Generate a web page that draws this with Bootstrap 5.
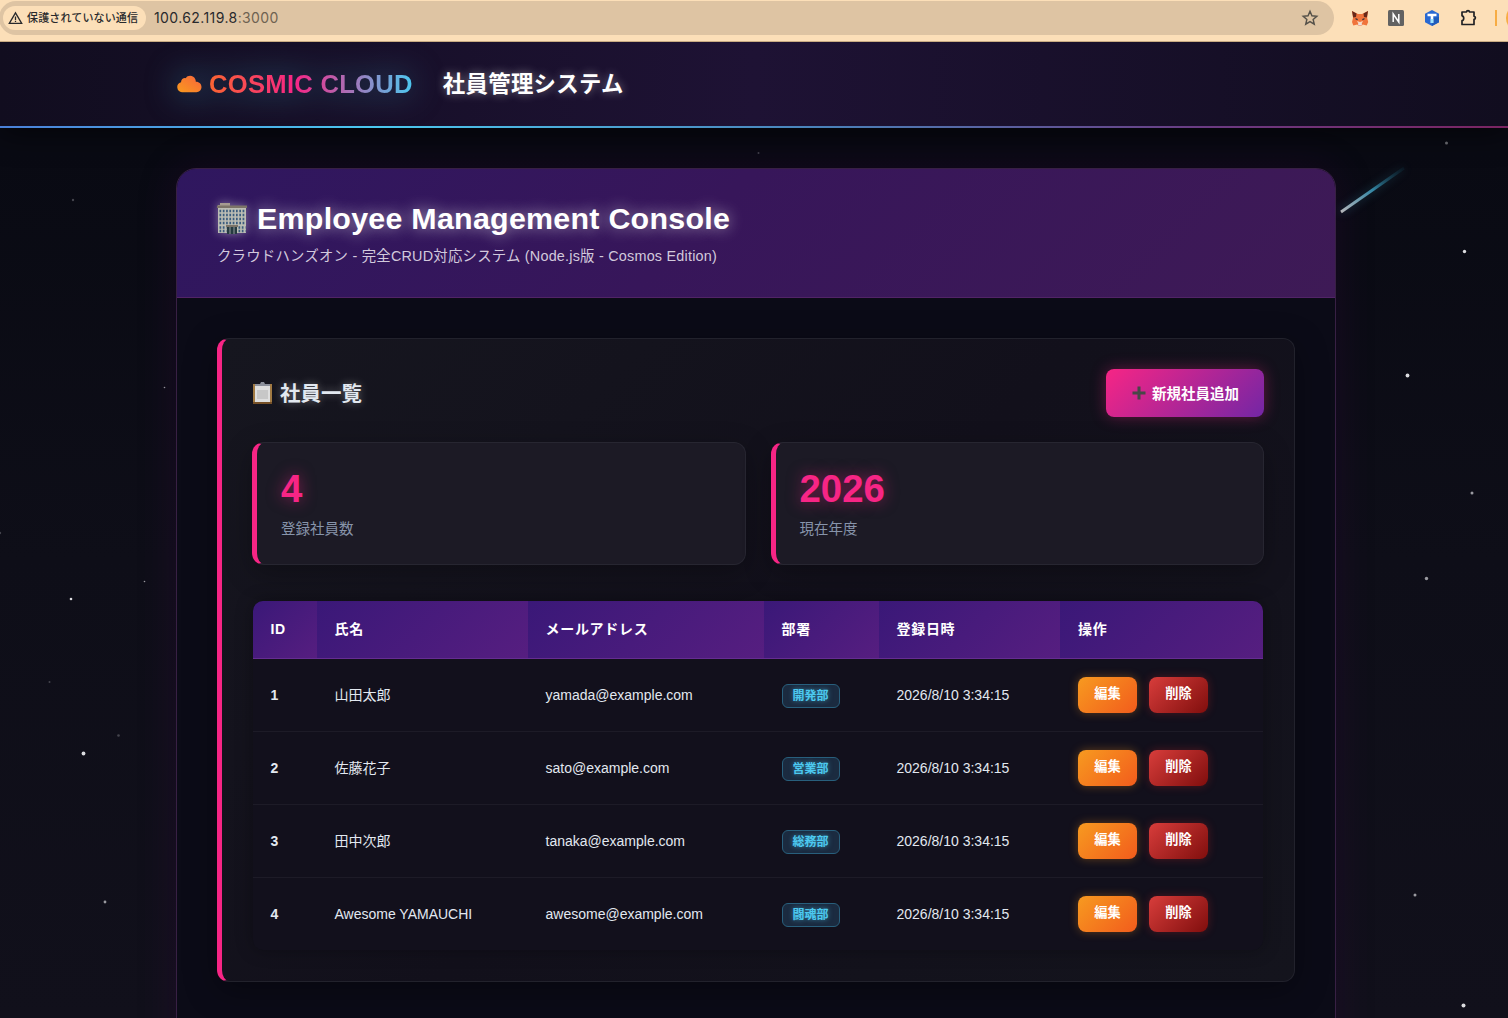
<!DOCTYPE html>
<html lang="ja" data-bs-theme="dark">
<head>
<meta charset="utf-8">
<title>COSMIC CLOUD - 社員管理システム</title>
<link rel="stylesheet" href="https://cdn.jsdelivr.net/npm/bootstrap@5.3.0/dist/css/bootstrap.min.css">
<style>
:root{--pink:#f72585;--cyan:#4cc9f0;--jp:"Liberation Sans","Noto Sans CJK JP",sans-serif}
html,body{height:1018px;overflow:hidden}
body{background:linear-gradient(180deg,#090a13 15%,#0e0e18 55%,#11101b 100%);font-family:var(--jp);color:#e2e8f0;font-size:14px;position:relative;-webkit-font-smoothing:antialiased}
.chrome-bar{height:42px;background:#fcdfb8;border-bottom:1px solid #c8ab83;padding-bottom:5px;position:relative;z-index:3}
.omnibox{height:34px;width:1335px;margin-left:-1px;background:#dec4a3;border-radius:17px;padding:0 15px 0 4px;color:#28292c;font-family:Inter,"Noto Sans CJK JP",sans-serif}
.insecure{height:24px;width:143px;border-radius:12px;background:#fcdfb8;font-size:11px;font-weight:500;padding-left:5px;white-space:nowrap;letter-spacing:.15px}
.address{font-size:14px;margin-left:8px;padding-bottom:1px;white-space:nowrap;letter-spacing:.4px}
.address span{color:#6e6251}
.chrome-icons{padding-left:17px;gap:18px;white-space:nowrap}
.site-head{height:86px;background:linear-gradient(90deg,#110d1f 0%,#1e1234 50%,#110d1f 100%);border-bottom:2px solid;border-image:linear-gradient(90deg,#4a7fd8,#4cc9f0 25%,#4a80b8 55%,#6b3a82 80%,#7b2462) 1;padding-left:176px;position:relative;z-index:2;box-shadow:0 4px 30px rgba(0,0,0,.6)}
.brand{filter:drop-shadow(0 0 16px rgba(76,201,240,.5))}
.brand-name{font-size:25.6px;font-weight:700;line-height:40px;margin-left:7px;letter-spacing:.28px;background:linear-gradient(90deg,#fa6432,#f72585 42%,#4cc9f0);-webkit-background-clip:text;background-clip:text;color:transparent;white-space:nowrap}
.sys-name{font-size:22.4px;font-weight:700;letter-spacing:.3px;margin-left:30px;padding-top:2px;color:#fff;text-shadow:0 0 10px rgba(255,255,255,.45);white-space:nowrap}
.sky{position:absolute;inset:0;width:1508px;height:1018px;z-index:0}
.console{width:1160px;height:900px;margin:40px 0 0 176px;border:1px solid #382044;border-radius:20px 20px 0 0;background:#0b0b17;overflow:hidden;position:relative;z-index:1}
.glow{box-shadow:0 0 40px rgba(80,9,90,.2)}
.console-head{height:129px;background:linear-gradient(135deg,#2f175f 0%,#37165a 45%,#3e1a56 100%);border-bottom:1px solid #512467;padding:26px 40px 0}
.console-title{font-size:30.4px;line-height:46px;font-weight:700;letter-spacing:.26px;color:#fff;text-shadow:0 0 15px rgba(255,255,255,.6);margin:0;white-space:nowrap}
.title-icon{margin-right:10px;filter:drop-shadow(0 0 5px rgba(255,255,255,.4))}
.console-sub{font-size:14.4px;line-height:22px;letter-spacing:.22px;color:#d2c9dc;margin:4px 0 0;white-space:nowrap}
.console-body{padding:40px 40px 0}
.panel{height:644px;background:linear-gradient(135deg,#16161f,#12101b 50%,#14141d);border:1px solid #22222c;border-left:5px solid var(--pink);border-radius:12px;padding:30px 30px 0;box-shadow:0 8px 32px rgba(0,0,0,.35)}
.panel-head{height:48px}
.panel-title{font-size:20.5px;font-weight:700;margin:0;padding-top:2px;color:#e2e8f0;text-shadow:0 0 8px rgba(255,255,255,.35)}
.panel-title svg{margin-right:7px;margin-top:-2px}
.btn-add{width:158px;height:48px;border:0;border-radius:8px;background:linear-gradient(135deg,#f72585,#7326a5);font-size:14.5px;font-weight:700;color:#fff;box-shadow:0 0 15px rgba(247,37,133,.35);padding:3px 0 0 1px;white-space:nowrap}
.btn-add svg{margin-right:6px;margin-top:-4px}
.stats{margin-top:25px;gap:25px}
.stat{height:123px;flex:1;background:#1c1a25;border:1px solid #272631;border-left:5px solid var(--pink);border-radius:12px;padding:24px;box-shadow:0 8px 28px rgba(0,0,0,.28)}
.stat-num{font-size:38.4px;line-height:44px;font-weight:700;color:var(--pink);text-shadow:0 0 15px rgba(247,37,133,.5)}
.stat-label{font-size:14.5px;line-height:22px;color:#8794aa;margin-top:7px}
.grid-wrap{margin:36px 1px 0;border-radius:10px;overflow:hidden;background:#12101c;box-shadow:0 0 18px rgba(0,0,0,.3)}
.people{--bs-table-bg:transparent;table-layout:fixed;width:1010px;margin:0;color:#e2e8f0;white-space:nowrap}
.people>thead>tr>th{height:57px;padding:1px 18px 1px 17.5px;background:linear-gradient(135deg,#3a1878,#561e80);border-bottom:1px solid #652d91;color:#fff;vertical-align:middle;letter-spacing:.7px;font-size:14px}
.people>tbody>tr>td{height:73px;padding:2px 18px 0 17.5px;vertical-align:middle;border-bottom:1px solid #1d1b27;color:#e2e8f0;font-size:14px}
.people>tbody>tr>td:last-child{padding-top:0;padding-left:18px}
.people>thead>tr>th:last-child{padding-left:18px}
.people>tbody>tr:last-child>td{border-bottom:0}
.dept{display:inline-block;position:static;width:58px;height:24px;border:1px solid #285f7c;border-radius:6px;background:#1b2b40;color:var(--cyan);font-size:12px;font-weight:700;line-height:22px;text-align:center;text-shadow:0 0 5px rgba(76,201,240,.6);vertical-align:middle}
.act{width:59px;height:36px;border:0;border-radius:8px;color:#fff;font-size:13.2px;font-weight:700;padding:0 0 2px;line-height:34px}
.act-edit{background:linear-gradient(135deg,#f79a20,#f25c1c);box-shadow:0 0 10px rgba(248,150,30,.35)}
.act-del{background:linear-gradient(135deg,#d83d3b,#800e0d);box-shadow:0 0 10px rgba(214,40,40,.3)}
</style>
</head>
<body>
<svg class="sky" viewBox="0 0 1508 1018">
<defs><linearGradient id="tail" x1="0" y1="1" x2="1" y2="0"><stop offset="0" stop-color="#b5b5ba"/><stop offset=".5" stop-color="#3487a5"/><stop offset="1" stop-color="#0b2330" stop-opacity=".4"/></linearGradient></defs>
<g fill="#dcdce0"><circle cx="71" cy="599" r="1.3"/><circle cx="83.500" cy="753.500" r="1.900"/><circle cx="1464.500" cy="251.500" r="1.700"/><circle cx="1407.500" cy="375.500" r="1.900"/><circle cx="1463.500" cy="1005.500" r="2"/></g>
<g fill="#9a9aa0"><circle cx="105" cy="902" r="1.400"/><circle cx="1472" cy="493" r="1.500"/><circle cx="1426.500" cy="578.500" r="1.700"/><circle cx="1415" cy="895" r="1.500"/><circle cx="1446.500" cy="143" r="1.500" opacity=".7"/><circle cx="164.500" cy="387.500" r=".8"/><circle cx="144.500" cy="581.500" r=".8"/></g>
<g fill="#44444d"><circle cx="73" cy="200" r="1.200"/><circle cx="118.500" cy="735.500" r="1.300"/><circle cx="49.500" cy="682" r="1"/><circle cx="758.500" cy="153" r="1"/><circle cx="0" cy="533" r="1.200"/></g>
</svg>
<div class="chrome-bar d-flex align-items-center">
 <div class="omnibox d-flex align-items-center flex-shrink-0">
  <div class="insecure d-flex align-items-center gap-1"><svg width="15" height="14" viewBox="0 0 15 14" fill="none" stroke="#28292c" stroke-width="1.300"><path d="M7.500 1.800 13.700 12.300H1.300Z"/><path d="M7.500 5.500v3.400M7.500 9.800v1.300"/></svg>保護されていない通信</div>
  <div class="address">100.62.119.8<span>:3000</span></div>
  <svg class="ms-auto" width="18" height="18" viewBox="0 0 24 24" fill="none" stroke="#555149" stroke-width="1.900"><path d="m12 3 2.600 6 6.500.6-4.900 4.300 1.500 6.400L12 16.900l-5.700 3.400 1.500-6.400-4.900-4.300 6.500-.6Z"/></svg>
 </div>
 <div class="chrome-icons d-flex align-items-center">
  <svg width="18" height="18" viewBox="0 0 18 18"><path fill="#f0733b" d="m1 2 6 3h4l6-3-.8 7 1 4-1.500 3.500-4-1L10.500 17h-3l-1.200-1.500-4 1L1 13l1-4Z"/><path fill="#662819" d="m1 2 4.500 2.500L5 8 2.200 8.500ZM17 2l-4.500 2.500L13 8l2.800.5Z"/><path fill="#f7d8bf" d="m6 12 1.500 3h3l1.500-3-3 1Z"/><path fill="#35313a" d="m4.500 9 2.300 1-.2 1.300-2-.7ZM13.500 9l-2.300 1 .2 1.300 2-.7Z"/><path fill="#e9e2e2" d="M7.300 14.500h3.400l.3 2H7Z"/></svg>
  <svg width="18" height="18" viewBox="0 0 18 18"><rect x="1" y="1" width="16" height="16" rx="1.500" fill="#626262"/><path d="M6.200 13V5l5.600 8V5" fill="none" stroke="#fff" stroke-width="1.500"/></svg>
  <svg width="18" height="18" viewBox="0 0 18 18"><path d="m9 1 7 3.800v8.400L9 17l-7-3.800V4.800Z" fill="#2969d2"/><path d="M9 9v8l7-3.800V8Z" fill="#1f5cba"/><path d="M4.500 6h9M9 6v8" stroke="#fff" stroke-width="2.600"/><path d="M9 10v4" stroke="#9be4ff" stroke-width="2.600"/></svg>
  <svg width="18" height="18" viewBox="0 0 18 18" fill="none" stroke="#202124" stroke-width="1.700" stroke-linejoin="round"><path d="M3 3h4.500c.1-1.900 2.900-1.900 3 0H15v4.300c1.900.1 1.900 2.900 0 3V15.500H3v-3.800c2.300-.2 2.300-4.700 0-4.900Z"/></svg>
  <svg width="13" height="20" viewBox="0 0 13 20"><path d="M0 2h2v16H0Z" fill="#f7ac43"/><circle cx="25" cy="10" r="14" fill="#f7ac43"/></svg>
 </div>
</div>
<header class="site-head d-flex align-items-center">
 <div class="brand d-flex align-items-center">
  <svg width="26" height="18" viewBox="0 0 26 18"><defs><linearGradient id="cl" x1="0" y1="1" x2="1" y2="0"><stop stop-color="#f89a1e"/><stop offset="1" stop-color="#f9653c"/></linearGradient></defs><path fill="url(#cl)" d="M6 17.200a5.100 5.100 0 0 1-1-10C5 4 8 2.500 9.800 3.200c2-3.400 8-3.200 9.600 1.400.4.900.4 1.400.4 2.200 3.300-.2 5.700 2.300 5.700 5.200 0 3-2.300 5.200-5 5.200Z"/></svg>
  <span class="brand-name">COSMIC CLOUD</span>
 </div>
 <span class="sys-name">社員管理システム</span>
</header>
<main class="console glow">
 <div class="console-head">
  <h1 class="console-title d-flex align-items-center"><svg class="title-icon" width="30" height="32" viewBox="0 0 30 32"><path fill="#a69c91" d="M3 1h10v3h16v4H1V3h2Z"/><path fill="#bcbdb4" d="M1 6h28v25H1Z"/><path stroke="#3b5c7e" stroke-width="2.500" stroke-dasharray="1.700 1.600" d="M2.500 9h26M2.500 13h26M2.500 17h26M2.500 21h26M2.500 25.500h7M21.500 25.500h7M2.500 29h7M21.500 29h7"/><path fill="#7c7468" d="M0 3.500h30V6H0ZM9 23h12v2H9Z"/><path fill="#253a40" d="M10 25h10v7H10Z"/><path stroke="#93999a" d="M13 25v7M17 25v7"/></svg><span>Employee Management Console</span></h1>
  <p class="console-sub">クラウドハンズオン - 完全CRUD対応システム (Node.js版 - Cosmos Edition)</p>
 </div>
 <div class="console-body">
  <section class="panel">
   <div class="panel-head d-flex align-items-center justify-content-between">
    <h2 class="panel-title d-flex align-items-center"><svg width="21" height="23" viewBox="0 0 21 23"><path fill="#a17a43" d="M1 2h19v20H1Z"/><path fill="#765027" d="M1 20h19v2H1Z"/><path fill="#dedede" d="M3 3h15v17H3Z"/><path fill="#c7c7c7" d="M5 8h11v9H5Z"/><path fill="#8c909b" d="M3 2h5l1-2h3l1 2h5v2H3Z"/></svg>社員一覧</h2>
    <button class="btn btn-add d-flex align-items-center justify-content-center"><svg width="14" height="14" viewBox="0 0 14 14"><path d="M7 .5v13M.5 7h13" stroke="#474747" stroke-width="3"/></svg>新規社員追加</button>
   </div>
   <div class="stats d-flex">
    <div class="stat"><div class="stat-num">4</div><div class="stat-label">登録社員数</div></div>
    <div class="stat"><div class="stat-num">2026</div><div class="stat-label">現在年度</div></div>
   </div>
   <div class="grid-wrap">
    <table class="table people">
     <colgroup><col width="64"><col width="211"><col width="236"><col width="115"><col width="181"><col width="203"></colgroup>
     <thead><tr><th>ID</th><th>氏名</th><th>メールアドレス</th><th>部署</th><th>登録日時</th><th>操作</th></tr></thead>
     <tbody>
      <tr><td><b>1</b></td><td>山田太郎</td><td>yamada@example.com</td><td><span class="dept">開発部</span></td><td>2026/8/10 3:34:15</td><td><div class="d-flex"><button class="btn act act-edit me-2">編集</button><button class="btn act act-del ms-1">削除</button></div></td></tr>
      <tr><td><b>2</b></td><td>佐藤花子</td><td>sato@example.com</td><td><span class="dept">営業部</span></td><td>2026/8/10 3:34:15</td><td><div class="d-flex"><button class="btn act act-edit me-2">編集</button><button class="btn act act-del ms-1">削除</button></div></td></tr>
      <tr><td><b>3</b></td><td>田中次郎</td><td>tanaka@example.com</td><td><span class="dept">総務部</span></td><td>2026/8/10 3:34:15</td><td><div class="d-flex"><button class="btn act act-edit me-2">編集</button><button class="btn act act-del ms-1">削除</button></div></td></tr>
      <tr><td><b>4</b></td><td>Awesome YAMAUCHI</td><td>awesome@example.com</td><td><span class="dept">闘魂部</span></td><td>2026/8/10 3:34:15</td><td><div class="d-flex"><button class="btn act act-edit me-2">編集</button><button class="btn act act-del ms-1">削除</button></div></td></tr>
     </tbody>
    </table>
   </div>
  </section>
 </div>
</main>
<svg class="sky" style="z-index:1;pointer-events:none" viewBox="0 0 1508 1018"><path d="M1341 212 1404 168" stroke="url(#tail)" stroke-width="2.800" style="filter:drop-shadow(0 0 5px rgba(76,201,240,.3))"/></svg>
<script src="https://cdn.jsdelivr.net/npm/bootstrap@5.3.0/dist/js/bootstrap.bundle.min.js"></script>
</body>
</html>
